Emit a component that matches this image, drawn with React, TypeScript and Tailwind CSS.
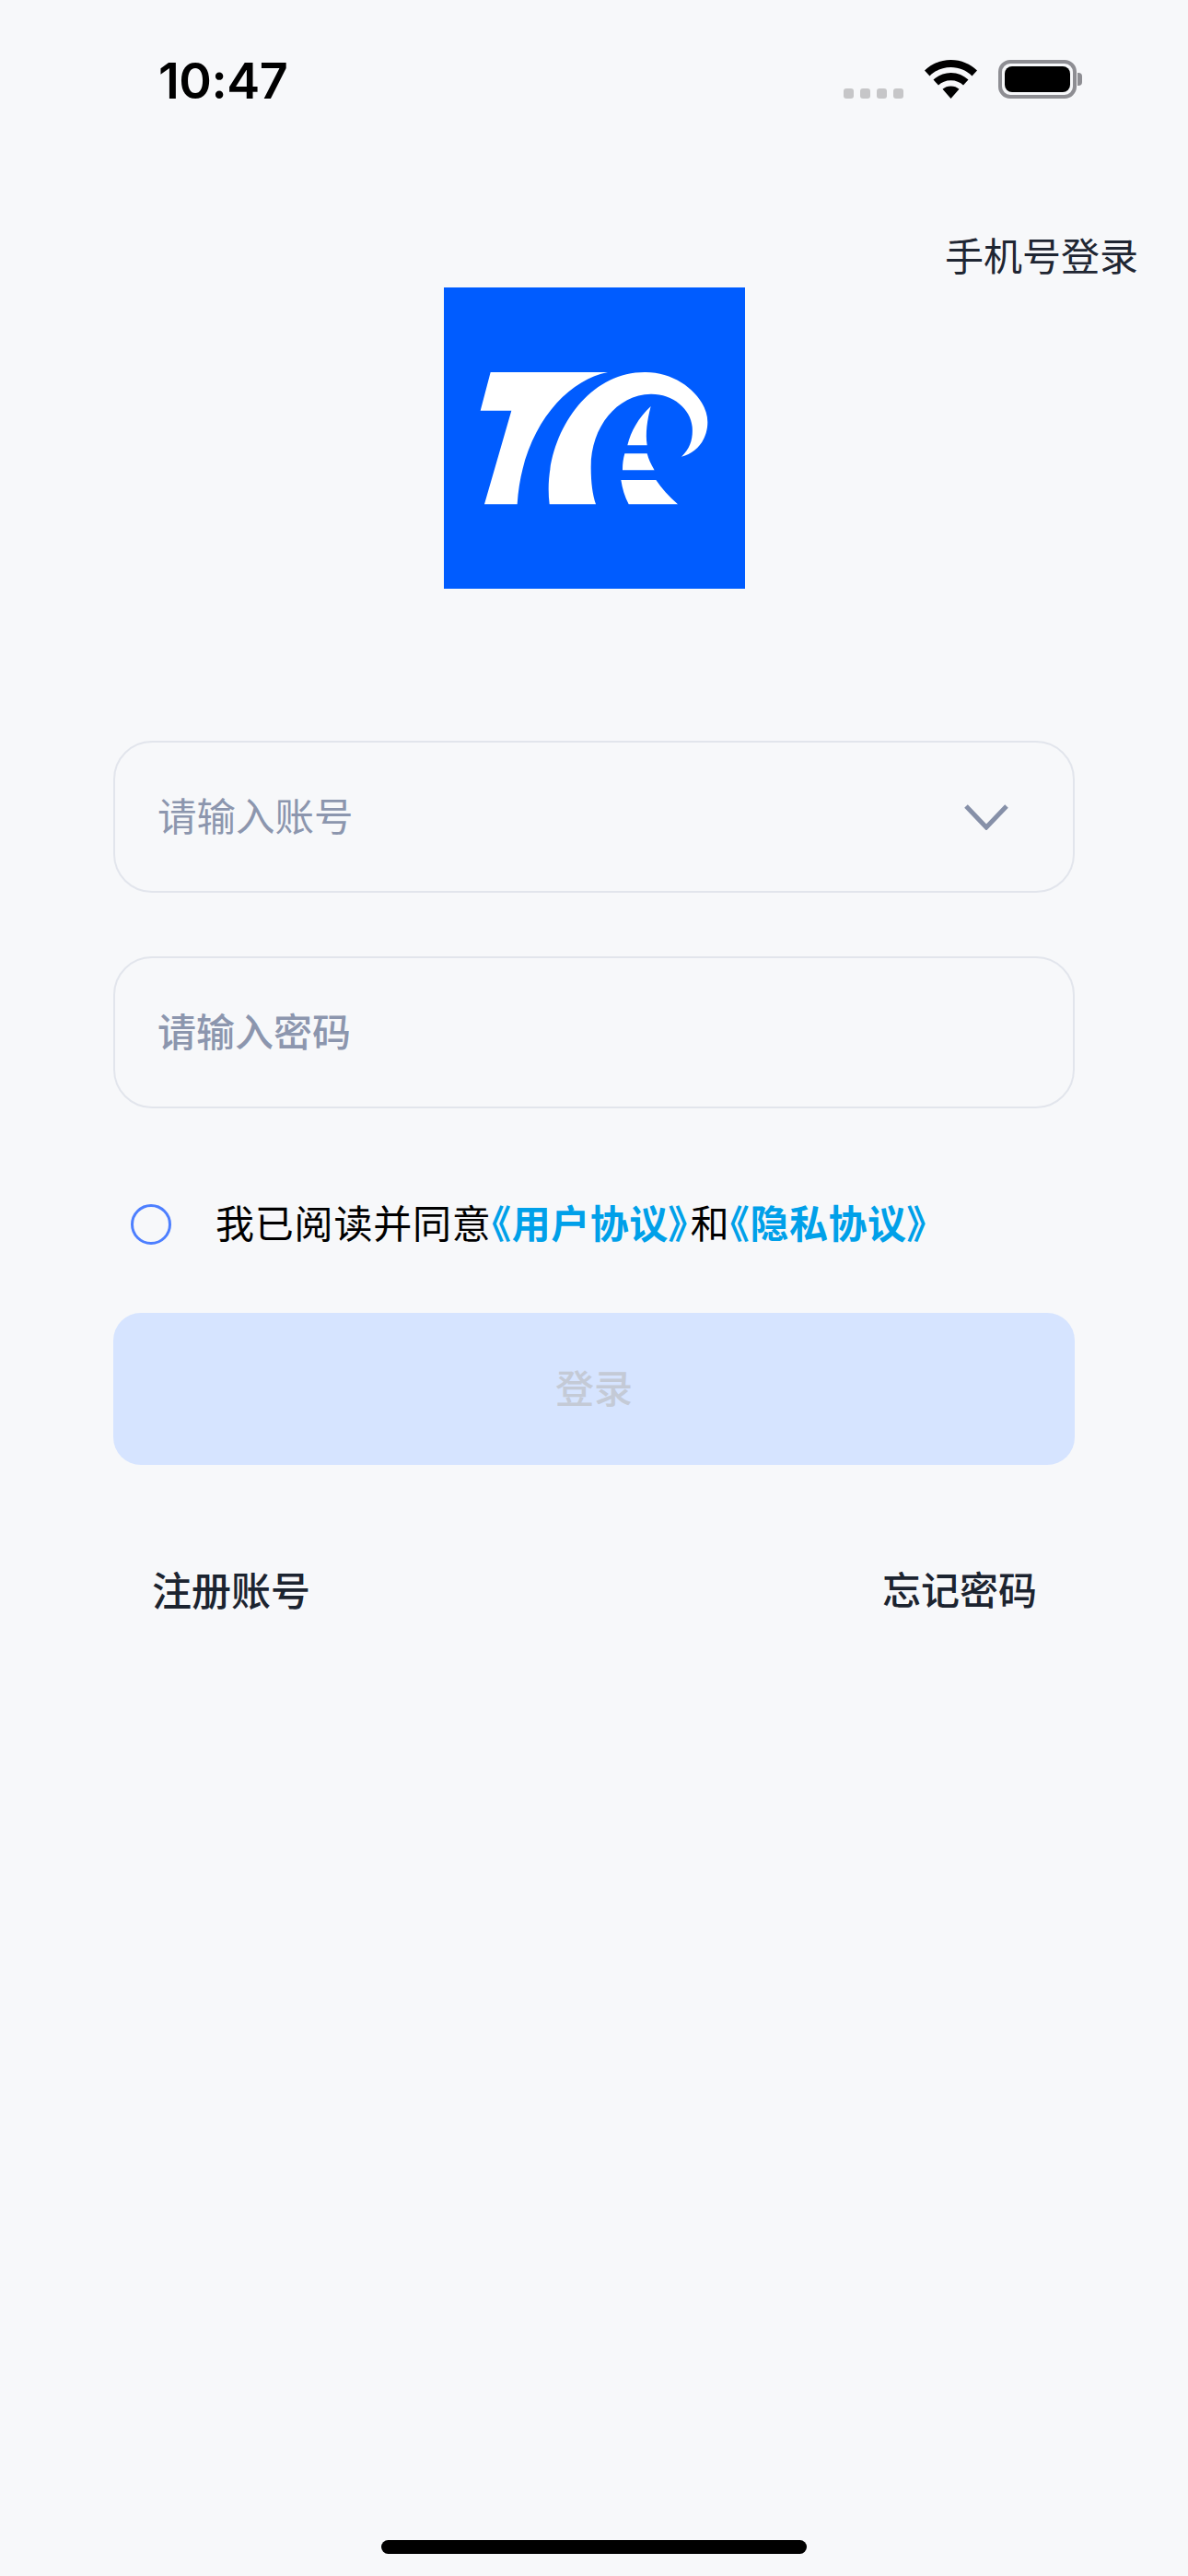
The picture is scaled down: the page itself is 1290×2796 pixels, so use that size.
import React from "react";

const cjk = "font-['Inter','Noto_Sans_CJK_SC',sans-serif]";

const Logo: React.FC = () => (
  <svg viewBox="36 36 981 981" className="h-[327px] w-[327px]">
    <rect x="36" y="36" width="981" height="981" fill="#005CFF" />
    <g fill="#fff">
      <path d="M188 312 L570 312 C430 340 290 500 275 742 L168 742 L256 437 L155 437 Z" />
      <path d="M380 742 C355 540 490 312 690 312 C800 310 895 395 895 475 C895 530 860 575 810 587 C840 560 848 525 845 490 C840 430 780 382 710 383 C600 385 515 490 515 620 C515 670 520 710 531 742 Z" />
      <path d="M710 423 C670 460 645 505 634 550 L698 550 C692 510 698 470 710 423 Z" />
      <path d="M625 577 L698 577 C703 595 710 612 722 631 L618 631 C618 610 620 595 625 577 Z" />
      <path d="M613 663 L727 663 C745 690 770 718 798 742 L638 742 C625 718 617 690 613 663 Z" />
    </g>
  </svg>
);

const StatusBar: React.FC = () => (
  <div className="flex h-[134px] items-start justify-between pl-[172px] pr-[115px] pt-[55px]">
    <span className="font-['Inter',sans-serif] text-[54px] leading-[66px] font-semibold tracking-[-0.5px] text-black">
      10:47
    </span>
    <div className="flex items-end pt-[10px]">
      <div className="flex gap-[7px]">
        <span className="h-[11px] w-[11px] rounded-[3px] bg-[#c6c6c8]" />
        <span className="h-[11px] w-[11px] rounded-[3px] bg-[#c6c6c8]" />
        <span className="h-[11px] w-[11px] rounded-[3px] bg-[#c6c6c8]" />
        <span className="h-[11px] w-[11px] rounded-[3px] bg-[#c6c6c8]" />
      </div>
      <svg viewBox="0 0 57 42" className="ml-[23px] h-[42px] w-[57px]" fill="#000">
        <path d="M28.5 0 C17 0 7.5 4.5 0 11.5 L5.5 17.5 C11.5 11.5 19.5 8 28.5 8 C37.5 8 45.5 11.5 51.5 17.5 L57 11.5 C49.5 4.5 40 0 28.5 0 Z" />
        <path d="M28.5 14 C21 14 14.5 17 9.5 21.5 L15 27.5 C18.5 24.3 23 22.3 28.5 22.3 C34 22.3 38.5 24.3 42 27.5 L47.5 21.5 C42.5 17 36 14 28.5 14 Z" />
        <path d="M28.5 28.5 C25 28.5 21.8 29.7 19.5 31.8 L28.5 42 L37.5 31.8 C35.2 29.7 32 28.5 28.5 28.5 Z" />
      </svg>
      <div className="ml-[23px] flex items-center">
        <div className="h-[42px] w-[85px] rounded-[13px] border-[4px] border-[#8e8e93] p-[3px]">
          <div className="h-full w-full rounded-[8px] bg-black" />
        </div>
        <div className="ml-px h-[14px] w-[5px] rounded-r-[4px] bg-[#8e8e93]" />
      </div>
    </div>
  </div>
);

const Agreement: React.FC<{ name: string }> = ({ name }) => (
  <span className="font-semibold tracking-[0.5px] text-[#00a0e9]">
    <span className="tracking-[1px] [font-feature-settings:'palt']">《</span>
    {name}
    <span className="tracking-[3px] [font-feature-settings:'palt']">》</span>
  </span>
);

const App: React.FC = () => {
  return (
    <div className={`relative flex h-[2796px] w-[1290px] flex-col overflow-hidden bg-[#f7f8fa] ${cjk}`}>
      <StatusBar />

      <div className="flex justify-end pr-[54px] pt-[117px] text-[42px] leading-[56px] text-[#1f2633]">
        手机号登录
      </div>

      <div className="mt-[5px] flex justify-center">
        <Logo />
      </div>

      <div className="mt-[165px] flex flex-col gap-[69px] px-[123px]">
        <div className="flex h-[165px] items-center justify-between rounded-[42px] border-2 border-[#e2e5ec] pl-[46px] pr-[70px]">
          <span className="text-[42.5px] text-[#8c96ae]">请输入账号</span>
          <svg viewBox="0 0 48 28" className="h-[28px] w-[48px]" fill="none" stroke="#8690a8" strokeWidth="5">
            <path d="M2 2 L24 25 L46 2" />
          </svg>
        </div>
        <div className="flex h-[165px] items-center rounded-[42px] border-2 border-[#e2e5ec] pl-[46px] pr-[70px]">
          <span className="text-[42px] font-medium text-[#8c96ae]">请输入密码</span>
        </div>
      </div>

      <div className="mt-[98px] flex items-center px-[142px]">
        <span className="h-[44px] w-[44px] rounded-full border-[3px] border-[#4d7fff]" />
        <p className="ml-[48px] text-[42px] leading-[56px] tracking-[0.8px] text-black">
          我已阅读并同意
          <Agreement name="用户协议" />和<Agreement name="隐私协议" />
        </p>
      </div>

      <div className="mx-[123px] mt-[68px] flex h-[165px] items-center justify-center rounded-[30px] bg-[#d6e4ff] text-[42px] font-medium text-[#c4cad6]">
        登录
      </div>

      <div className="mt-[107px] flex justify-between pl-[165px] pr-[164px] text-[42px] leading-[60px] font-medium text-[#1c2430]">
        <span className="text-[43px]">注册账号</span>
        <span>忘记密码</span>
      </div>

      <div className="mt-auto mb-[24px] flex justify-center">
        <div className="h-[15px] w-[462px] rounded-full bg-black" />
      </div>
    </div>
  );
};

export default App;
